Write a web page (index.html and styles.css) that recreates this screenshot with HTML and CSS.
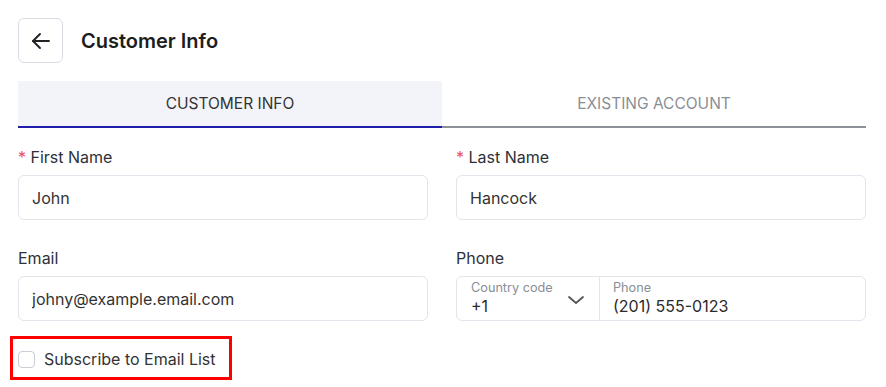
FILE: index.html
```html
<!DOCTYPE html>
<html lang="en">
<head>
    <meta charset="UTF-8">
    <meta name="viewport" content="width=device-width, initial-scale=1.0">
    <title>Customer Info</title>
    <link rel="stylesheet" href="styles.css">
</head>
<body>

<div class="page">
    <div class="header">
        <button class="back-btn" type="button" aria-label="Back">
            <svg width="22" height="22" viewBox="0 0 22 22" fill="none" stroke="#222" stroke-width="1.9" stroke-linecap="round" stroke-linejoin="round">
                <path d="M19 11H3"/>
                <path d="M10 4l-7 7 7 7"/>
            </svg>
        </button>
        <h1>Customer Info</h1>
    </div>

    <div class="tabs">
        <div class="tab active">CUSTOMER INFO</div>
        <div class="tab">EXISTING ACCOUNT</div>
    </div>

    <form class="form-grid">
        <div class="field">
            <label for="firstName"><span class="req">*</span> First Name</label>
            <input type="text" id="firstName" value="John">
        </div>
        <div class="field">
            <label for="lastName"><span class="req">*</span> Last Name</label>
            <input type="text" id="lastName" value="Hancock">
        </div>
        <div class="field">
            <label for="email">Email</label>
            <input type="text" id="email" value="johny@example.email.com">
        </div>
        <div class="field">
            <label for="phone">Phone</label>
            <div class="phone-group">
                <div class="country">
                    <span class="mini">Country code</span>
                    <span class="val">+1</span>
                    <svg class="chevron" width="18" height="10" viewBox="0 0 18 10" fill="none" stroke="#555" stroke-width="1.8" stroke-linecap="round" stroke-linejoin="round">
                        <path d="M2 2l7 6 7-6"/>
                    </svg>
                </div>
                <div class="phone-num">
                    <span class="mini">Phone</span>
                    <span class="val">(201) 555-0123</span>
                </div>
            </div>
        </div>
    </form>

    <label class="subscribe">
        <span class="box"></span>
        Subscribe to Email List
    </label>
</div>

</body>
</html>
```

FILE: styles.css
```css
body {
    margin: 0;
    font-family: Inter, "Noto Sans", Arial, sans-serif;
    color: #2b2b2b;
    background: #fff;
}
.page {
    width: 848px;
    padding: 18px;
}
.header {
    display: flex;
    align-items: center;
    gap: 18px;
}
.back-btn {
    width: 45px;
    height: 45px;
    border: 1px solid #d8dbe2;
    border-radius: 6px;
    background: #fff;
    display: flex;
    align-items: center;
    justify-content: center;
    padding: 0;
}
h1 {
    margin: 0;
    font-size: 20px;
    font-weight: 600;
    color: #1d1d1d;
}
.tabs {
    display: flex;
    margin-top: 18px;
}
.tab {
    flex: 1;
    height: 45px;
    display: flex;
    align-items: center;
    justify-content: center;
    font-size: 15.5px;
    color: #8a8e96;
    border-bottom: 2px solid #8c9099;
}
.tab.active {
    background: #f3f4fa;
    color: #333;
    border-bottom-color: #1e1eaa;
}
.form-grid {
    display: grid;
    grid-template-columns: 1fr 1fr;
    column-gap: 28px;
    row-gap: 28px;
    margin-top: 19px;
}
.field label {
    display: block;
    font-size: 16px;
    color: #2d3139;
    margin-bottom: 8px;
    line-height: 20px;
}
.req {
    color: #e8505b;
}
.field input {
    width: 100%;
    box-sizing: border-box;
    height: 45px;
    border: 1px solid #e1e5ec;
    border-radius: 6px;
    padding: 0 13px;
    font-family: inherit;
    font-size: 16px;
    color: #333;
}
.phone-group {
    display: flex;
    height: 45px;
    box-sizing: border-box;
    border: 1px solid #e1e5ec;
    border-radius: 6px;
}
.country {
    position: relative;
    width: 143px;
    border-right: 1px solid #e1e5ec;
    padding: 3px 14px 0;
    box-sizing: border-box;
}
.phone-num {
    flex: 1;
    padding: 3px 13px 0;
}
.mini {
    display: block;
    font-size: 12.7px;
    color: #8a8e96;
    line-height: 16px;
}
.val {
    display: block;
    font-size: 16px;
    color: #2b2b2b;
    line-height: 20px;
}
.chevron {
    position: absolute;
    right: 14px;
    top: 18px;
}
.subscribe {
    display: inline-flex;
    align-items: center;
    gap: 9px;
    margin: 15px 0 0 -8px;
    padding: 10px 13px 8px 5px;
    border: 3px solid #f00;
    font-size: 16px;
    line-height: 20px;
    color: #333;
}
.box {
    width: 17px;
    height: 17px;
    box-sizing: border-box;
    border: 1px solid #c9cdd5;
    border-radius: 4px;
}
```
